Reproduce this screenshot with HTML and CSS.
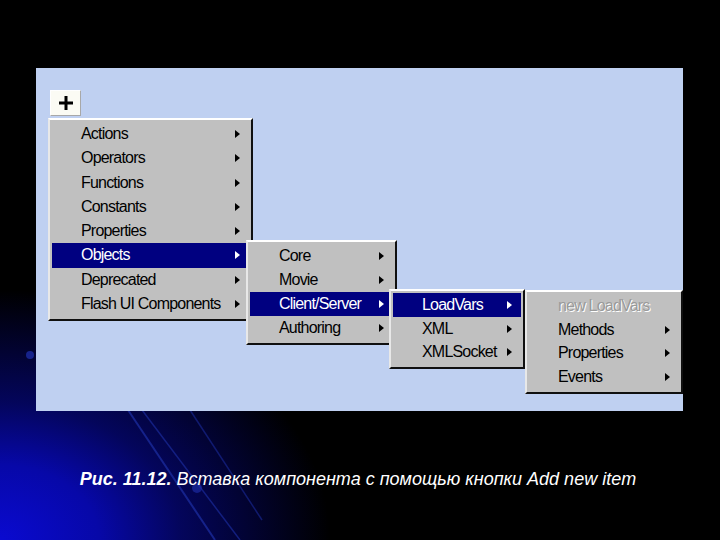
FILE: index.html
```html
<!DOCTYPE html>
<html>
<head>
<meta charset="utf-8">
<link rel="stylesheet" href="styles.css">
</head>
<body>
<div class="slide">
  <svg class="rays" width="720" height="540" viewBox="0 0 720 540">
    <line x1="128" y1="410" x2="215" y2="540" stroke="#1a2a9a" stroke-width="2" opacity="0.8"/>
    <line x1="142" y1="410" x2="240" y2="540" stroke="#1a2a9a" stroke-width="1.5" opacity="0.7"/>
    <line x1="190" y1="410" x2="262" y2="520" stroke="#1a2a9a" stroke-width="1.5" opacity="0.6"/>
    <circle cx="30" cy="355" r="4" fill="#2030b0" opacity="0.7"/>
    <circle cx="197" cy="488" r="5" fill="#2030b0" opacity="0.6"/>
  </svg>
  <div class="panel">
    <div class="plus-btn">
      <svg width="14" height="14" viewBox="0 0 14 14"><rect x="5.5" y="0" width="3" height="14" fill="#000"/><rect x="0" y="5.5" width="14" height="3" fill="#000"/></svg>
    </div>
    <div class="menu m1">
      <div class="item"><span>Actions</span><i class="arr"></i></div>
      <div class="item"><span>Operators</span><i class="arr"></i></div>
      <div class="item"><span>Functions</span><i class="arr"></i></div>
      <div class="item"><span>Constants</span><i class="arr"></i></div>
      <div class="item"><span>Properties</span><i class="arr"></i></div>
      <div class="item sel"><span>Objects</span><i class="arr"></i></div>
      <div class="item"><span>Deprecated</span><i class="arr"></i></div>
      <div class="item"><span>Flash UI Components</span><i class="arr"></i></div>
    </div>
    <div class="menu m2">
      <div class="item"><span>Core</span><i class="arr"></i></div>
      <div class="item"><span>Movie</span><i class="arr"></i></div>
      <div class="item sel"><span>Client/Server</span><i class="arr"></i></div>
      <div class="item"><span>Authoring</span><i class="arr"></i></div>
    </div>
    <div class="menu m3">
      <div class="item sel"><span>LoadVars</span><i class="arr"></i></div>
      <div class="item"><span>XML</span><i class="arr"></i></div>
      <div class="item"><span>XMLSocket</span><i class="arr"></i></div>
    </div>
    <div class="menu m4">
      <div class="item dis"><span>new LoadVars</span></div>
      <div class="item"><span>Methods</span><i class="arr"></i></div>
      <div class="item"><span>Properties</span><i class="arr"></i></div>
      <div class="item"><span>Events</span><i class="arr"></i></div>
    </div>
  </div>
  <p class="caption"><b>Рис. 11.12.</b> Вставка компонента с помощью кнопки Add new item</p>
</div>
</body>
</html>
```
FILE: styles.css
```css
html, body {
  margin: 0;
  padding: 0;
}
body {
  width: 720px;
  height: 540px;
  overflow: hidden;
  background: #000;
}
.slide {
  position: relative;
  width: 720px;
  height: 540px;
  overflow: hidden;
  padding-top: 68px;
  box-sizing: border-box;
  background:
    radial-gradient(ellipse 330px 250px at 0% 100%, #0a0ad0 0%, #0708a8 30%, rgba(5,7,122,0.75) 55%, rgba(0,0,0,0) 100%),
    #000;
}
.rays {
  position: absolute;
  left: 0;
  top: 0;
}
.panel {
  position: relative;
  margin-left: 36px;
  width: 647px;
  height: 343px;
  background: #bfd0f1;
  font-family: "Liberation Sans", Arial, sans-serif;
  font-size: 16px;
}
.plus-btn {
  position: absolute;
  left: 14px;
  top: 22px;
  width: 31px;
  height: 26px;
  box-sizing: border-box;
  background: #fbfbf4;
  border-top: 1px solid #ffffff;
  border-left: 1px solid #ffffff;
  border-right: 1px solid #a8a8a8;
  border-bottom: 1px solid #a8a8a8;
  display: flex;
  align-items: center;
  justify-content: center;
}
.menu {
  position: absolute;
  box-sizing: border-box;
  background: #c0c0c0;
  border-top: 2px solid #ffffff;
  border-left: 2px solid #e8e8e8;
  border-right: 2px solid #101010;
  border-bottom: 2px solid #101010;
  padding: 2px 2px 3px 2px;
  display: flex;
  flex-direction: column;
}
.item {
  height: 24.4px;
  display: flex;
  align-items: center;
  justify-content: space-between;
  color: #000;
  white-space: nowrap;
  letter-spacing: -0.8px;
}
.item span {
  padding-left: 29px;
}
.item.sel {
  background: #000080;
  color: #fff;
}
.item.dis {
  color: #9a9a9a;
  text-shadow: 1px 1px 0 #ffffff;
}
.arr {
  display: block;
  width: 0;
  height: 0;
  border-top: 4px solid transparent;
  border-bottom: 4px solid transparent;
  border-left: 5px solid #000;
  margin-right: 9px;
}
.item.sel .arr {
  border-left-color: #fff;
}
.m1 { left: 12px; top: 50px; width: 205px; height: 203px; }
.m2 { left: 210px; top: 172px; width: 151px; height: 105px; }
.m3 { left: 353px; top: 221px; width: 136px; height: 80px; }
.m4 { left: 489px; top: 222px; width: 158px; height: 104px; }
.caption {
  margin: 58px 0 0 0;
  padding-right: 4px;
  text-align: center;
  color: #fff;
  font-family: "Liberation Sans", Arial, sans-serif;
  font-style: italic;
  font-size: 18px;
  position: relative;
}
.caption b {
  font-weight: bold;
}
```
